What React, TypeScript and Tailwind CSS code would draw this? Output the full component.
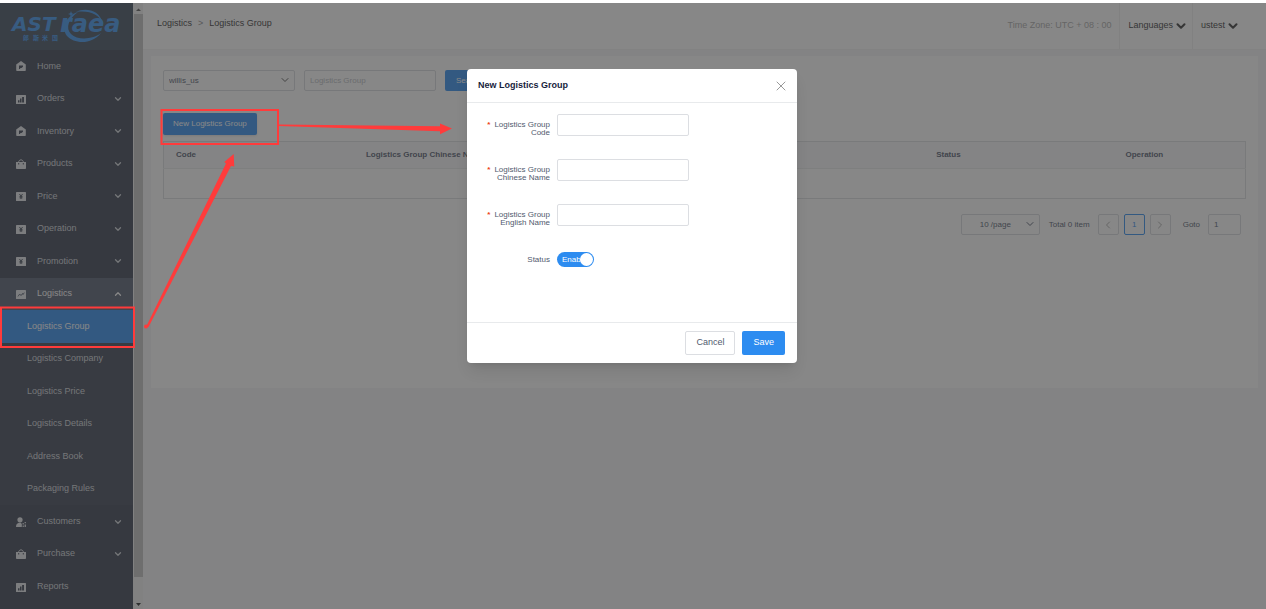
import { useState } from 'react';
import type { ReactNode } from 'react';
import { ChevronDown, ChevronLeft, ChevronRight, ChevronUp, X } from 'lucide-react';

type IconName = 'home' | 'bars' | 'bag' | 'yen' | 'trend' | 'user';

interface MenuItem {
  label: string;
  icon: IconName;
  expandable: boolean;
  children?: string[];
}

const MENU: MenuItem[] = [
  { label: 'Home', icon: 'home', expandable: false },
  { label: 'Orders', icon: 'bars', expandable: true },
  { label: 'Inventory', icon: 'home', expandable: true },
  { label: 'Products', icon: 'bag', expandable: true },
  { label: 'Price', icon: 'yen', expandable: true },
  { label: 'Operation', icon: 'yen', expandable: true },
  { label: 'Promotion', icon: 'yen', expandable: true },
  {
    label: 'Logistics',
    icon: 'trend',
    expandable: true,
    children: [
      'Logistics Group',
      'Logistics Company',
      'Logistics Price',
      'Logistics Details',
      'Address Book',
      'Packaging Rules',
    ],
  },
  { label: 'Customers', icon: 'user', expandable: true },
  { label: 'Purchase', icon: 'bag', expandable: true },
  { label: 'Reports', icon: 'bars', expandable: false },
];

const FIELDS = [
  { id: 'code', lines: ['Logistics Group', 'Code'] },
  { id: 'chinese-name', lines: ['Logistics Group', 'Chinese Name'] },
  { id: 'english-name', lines: ['Logistics Group', 'English Name'] },
];

const ICONS: Record<IconName, ReactNode> = {
  home: (
    <path
      fillRule="evenodd"
      d="M5 0 9.8 3.4V9.2a.8.8 0 0 1-.8.8H1a.8.8 0 0 1-.8-.8V3.4ZM3 4.4V8h1.2V7h1.3L7 5.8V4.4Z"
    />
  ),
  bars: (
    <path
      fillRule="evenodd"
      d="M.6 1h8.8a.6.6 0 0 1 .6.6v7.8a.6.6 0 0 1-.6.6H.6a.6.6 0 0 1-.6-.6V1.6A.6.6 0 0 1 .6 1ZM2 6.2v2.2h1.5V6.2Zm2-1.6v3.8h1.5V4.6Zm2.1-1.6v5.4h1.9V3Z"
    />
  ),
  bag: (
    <>
      <path
        fillRule="evenodd"
        d="M0 3h10v6.2a.8.8 0 0 1-.8.8H.8a.8.8 0 0 1-.8-.8ZM2.2 4v1.5h1V4Zm4.6 0v1.5h1V4Z"
      />
      <path d="M2.6 3.5C2.6 0 7.4 0 7.4 3.5" fill="none" stroke="currentColor" />
    </>
  ),
  yen: (
    <>
      <rect y="1" width="10" height="9" rx="0.6" />
      <path d="m3.4 3 1.6 2 1.6-2M5 5v3M3.5 5.4h3M3.5 6.8h3" fill="none" stroke="#363e4f" strokeWidth="0.9" />
    </>
  ),
  trend: (
    <>
      <rect y="1" width="10" height="9" rx="0.6" />
      <path d="M2 7.4 3.7 5 5 6.6 6.6 4.4 7 5.6 8.3 3.6" fill="none" stroke="#515a6e" strokeWidth="0.9" />
    </>
  ),
  user: (
    <>
      <circle cx="4" cy="2.8" r="2.6" />
      <path d="M0 10c0-3 1.3-3.6 3-4.2h1.8L5.8 7v3Z" />
      <path d="M6.6 6h1.2v1.4H6.6ZM8.6 5h1.3v1.3H8.6ZM6.6 8.5h1.2V10H6.6ZM8.6 7.5h1.3V10H8.6Z" />
    </>
  ),
};

function MenuIcon({ name }: { name: IconName }) {
  return (
    <svg viewBox="0 0 10 10" fill="currentColor" className="size-2.5 shrink-0 text-[#e4e6ea]" aria-hidden="true">
      {ICONS[name]}
    </svg>
  );
}

function Logo() {
  return (
    <svg viewBox="0 0 133 47" className="h-[47px] w-full" role="img" aria-label="Astraea" fill="#3a94f0">
      <g fontFamily="DejaVu Sans, sans-serif" fontWeight="bold" fontStyle="italic">
        <text x="12" y="28" fontSize="20">AST</text>
        <text x="60" y="29" fontSize="24">raea</text>
      </g>
      <g fontSize="6" fontWeight="bold" fontFamily="Noto Sans CJK SC, sans-serif">
        <text x="23" y="37">郎</text>
        <text x="33" y="37">斯</text>
        <text x="42" y="37">米</text>
        <text x="52" y="37">国</text>
      </g>
      <path d="M78 9C66 13 61 25 67 33 74 41 92 42 101 30 94 36 78 38 71 31 65 25 69 15 78 9Z" />
      <path d="M76 9C86 4 100 8 102 19 99 12 90 7 76 9Z" />
      <path d="m71 8 .8 2.200L74 11l-2.200.8L71 14l-.8-2.200L68 11l2.200-.8Z" />
    </svg>
  );
}

function Sidebar() {
  return (
    <aside className="flex w-[133px] shrink-0 flex-col bg-[#363e4f] text-[#d0d4da]">
      <div className="shrink-0 bg-[#3d4c5c]">
        <Logo />
      </div>
      <nav className="flex min-h-0 flex-1 flex-col pb-1.5 text-[9px]">
        {MENU.map((item) => (
          <div key={item.label} className="contents">
            <a
              href="#"
              className={`flex flex-1 items-center pr-2.5 pl-4 ${item.children ? 'bg-[#515a6e] text-white' : ''}`}
            >
              <MenuIcon name={item.icon} />
              <span className="ml-[11px] flex-1">{item.label}</span>
              {item.expandable &&
                (item.children ? (
                  <ChevronUp className="size-2.5" strokeWidth={3} />
                ) : (
                  <ChevronDown className="size-2.5" strokeWidth={3} />
                ))}
            </a>
            {item.children?.map((child, i) => (
              <a
                key={child}
                href="#"
                className={`flex flex-1 items-center pl-[27px] ${i === 0 ? 'bg-[#2d8cf0] text-white' : 'bg-[#3b4253]'}`}
              >
                {child}
              </a>
            ))}
          </div>
        ))}
      </nav>
    </aside>
  );
}

function ScrollRail() {
  return (
    <div className="flex w-2.5 shrink-0 flex-col items-end bg-[#f1f1f1]" aria-hidden="true">
      <svg viewBox="0 0 10 11" className="h-[11px] w-2.5">
        <path d="M3 8h5L5.500 5.500Z" fill="#555" />
      </svg>
      <div className="w-[9px] flex-1 bg-[#c1c1c1]" />
      <svg viewBox="0 0 10 32" className="h-8 w-2.5">
        <path d="M3 26h5L5.500 29Z" fill="#222" />
      </svg>
    </div>
  );
}

function Header() {
  return (
    <header className="flex h-[47px] shrink-0 items-stretch border-b border-[#f3f3f3] bg-white text-[9px] text-[#333]">
      <div className="flex flex-1 items-start gap-1.5 pt-3.5 pl-3.5">
        <a href="#">Logistics</a>
        <span className="text-[#888]">&gt;</span>
        <a href="#">Logistics Group</a>
      </div>
      <span className="flex items-center pr-2 text-[#aaa]">Time Zone: UTC + 08 : 00</span>
      <button className="flex items-center border-l border-[#f0f0f0] pr-1 pl-2">
        Languages <ChevronDown className="ml-px size-3.5" strokeWidth={3.5} />
      </button>
      <button className="mr-[26px] flex items-center border-l border-[#f0f0f0] pl-2">
        ustest <ChevronDown className="ml-px size-3.5" strokeWidth={3.5} />
      </button>
    </header>
  );
}

function Filters() {
  return (
    <div className="flex gap-[9px]">
      <div className="relative flex">
        <select
          aria-label="Account"
          className="h-[21px] w-[132px] appearance-none rounded-xs border border-[#d7d9de] bg-white pl-[5px] text-[8px] text-[#515a6e]"
        >
          <option>willis_us</option>
        </select>
        <ChevronDown className="pointer-events-none absolute top-1 right-1 size-3 text-[#555]" />
      </div>
      <input
        aria-label="Logistics Group"
        placeholder="Logistics Group"
        className="h-[21px] w-[132px] rounded-xs border border-[#d7d9de] pl-[5px] text-[8px] placeholder:text-[#b8bbc2]"
      />
      <button className="h-[21px] rounded-xs bg-[#2d8cf0] px-[11px] text-[8px] text-white">Search</button>
    </div>
  );
}

function Pagination() {
  return (
    <div className="mt-[15px] flex items-center justify-end pr-[5px] text-[8px] text-[#515a6e]">
      <div className="relative flex">
        <select
          aria-label="Page size"
          className="h-[21px] w-[79px] appearance-none rounded-xs border border-[#d7d9de] bg-white pl-[18px]"
        >
          <option>10 /page</option>
        </select>
        <ChevronDown className="pointer-events-none absolute top-1 right-1 size-3" />
      </div>
      <span className="mr-2 ml-[9px]">Total 0 item</span>
      <div className="flex gap-[5px]">
        <button aria-label="Previous page" className="grid size-[21px] place-items-center rounded-xs border border-[#d7d9de]">
          <ChevronLeft className="size-3 text-[#aaa]" />
        </button>
        <button className="grid size-[21px] place-items-center rounded-xs border border-[#2d8cf0] text-[#2d8cf0]">1</button>
        <button aria-label="Next page" className="grid size-[21px] place-items-center rounded-xs border border-[#d7d9de]">
          <ChevronRight className="size-3 text-[#aaa]" />
        </button>
      </div>
      <label htmlFor="goto" className="mr-2 ml-3">Goto</label>
      <input id="goto" defaultValue="1" className="h-[21px] w-[33px] rounded-xs border border-[#d7d9de] pl-[5px]" />
    </div>
  );
}

function GroupModal() {
  const [enabled, setEnabled] = useState(true);

  return (
    <form
      role="dialog"
      aria-labelledby="modal-title"
      className="mt-[66px] flex w-[330px] flex-col self-start rounded bg-white text-[#515a6e] shadow-lg"
    >
      <div className="flex h-[34px] items-center justify-between border-b border-[#e8eaec] pr-2 pl-[11px]">
        <h2 id="modal-title" className="text-[9px] font-bold text-[#17233d]">New Logistics Group</h2>
        <button type="button" aria-label="Close">
          <X className="size-4 text-[#999]" strokeWidth={1.5} />
        </button>
      </div>
      <div className="flex h-[219px] flex-col px-4 pt-[11px] text-[8px]">
        {FIELDS.map((field) => (
          <div key={field.id} className="mb-[23px] flex h-[22px] items-start">
            <label htmlFor={field.id} className="mr-[7px] w-[67px] pt-[7px] text-right leading-2">
              <span className="mr-1 font-bold text-[#ed4014]">*</span>
              {field.lines[0]}
              <br />
              {field.lines[1]}
            </label>
            <input id={field.id} className="h-[22px] w-[132px] rounded-xs border border-[#dcdee2] px-1.5" />
          </div>
        ))}
        <div className="mt-[3px] flex h-[15px] items-center">
          <label htmlFor="status" className="mr-[7px] w-[67px] text-right">Status</label>
          <span className="relative h-[15px] w-[37px] overflow-hidden rounded-full bg-[#2d8cf0]">
            <input
              id="status"
              type="checkbox"
              role="switch"
              checked={enabled}
              onChange={(e) => setEnabled(e.target.checked)}
              className="peer absolute inset-0 z-10 cursor-pointer opacity-0"
            />
            <span className="absolute inset-y-0 left-[5px] flex items-center text-[8px] text-white">Enable</span>
            <span className="absolute top-px left-px size-[13px] rounded-full bg-white peer-checked:right-px peer-checked:left-auto" />
          </span>
        </div>
      </div>
      <div className="flex justify-end gap-[7px] border-t border-[#e8eaec] px-3 py-2 text-[9px]">
        <button type="button" className="h-6 rounded-xs border border-[#dcdee2] px-2.5">Cancel</button>
        <button type="button" className="h-6 rounded-xs bg-[#2d8cf0] px-[11px] text-white">Save</button>
      </div>
    </form>
  );
}

// Red boxes and arrows that walk through the steps
function Annotations() {
  return (
    <svg
      viewBox="0 0 1266 609"
      className="pointer-events-none absolute top-0 left-0 z-20 h-[609px] w-[1266px]"
      fill="#ff3b3b"
      aria-hidden="true"
    >
      <g fill="none" stroke="#ff3b3b" strokeWidth="2">
        <rect x="1" y="307.500" width="133" height="39.500" />
        <rect x="161.500" y="110" width="116.500" height="34" />
      </g>
      <path d="M279 124.500v1.500l161 5.200v3L452 128.600 440 123.500v2.700Z" />
      <path d="M146.500 326 148.500 327 231 166 234.200 166.500 233.700 154 224.300 162 226 163.500Z" />
      <circle cx="146" cy="326.500" r="2" />
    </svg>
  );
}

export default function App() {
  return (
    <div className="relative flex h-screen flex-col overflow-hidden bg-white pt-[3px] font-['Liberation_Sans',Arial,sans-serif]">
      <div className="relative flex min-h-0 flex-1">
        <Sidebar />
        <ScrollRail />
        <div className="flex min-w-0 flex-1 flex-col bg-[#f6f6f7]">
          <Header />
          <main className="mx-2 mt-1.5 h-[332px] bg-white px-3 pt-3.5">
            <Filters />
            <button className="mt-[22px] h-[22px] rounded-xs bg-[#2d8cf0] px-2.5 text-[8px] text-white shadow">
              New Logistics Group
            </button>
            <table className="mt-1.5 w-full table-fixed border border-[#dcdee2] text-left text-[8px] text-[#515a6e]">
              <colgroup>
                <col className="w-[17.6%]" />
                <col className="w-[17.6%]" />
                <col className="w-[35.1%]" />
                <col className="w-[17.5%]" />
                <col />
              </colgroup>
              <thead>
                <tr className="h-[27px] bg-[#f8f8f9]">
                  <th className="pl-3">Code</th>
                  <th className="pl-3">Logistics Group Chinese Name</th>
                  <th className="pl-3">Logistics Group English Name</th>
                  <th className="pl-3">Status</th>
                  <th className="pl-3">Operation</th>
                </tr>
              </thead>
              <tbody>
                <tr className="h-[30px] border-t border-[#e8eaec]">
                  <td colSpan={5} />
                </tr>
              </tbody>
            </table>
            <Pagination />
          </main>
        </div>
        <div className="absolute inset-0 z-10 flex justify-center bg-[rgba(55,55,55,0.6)] pr-0.5">
          <GroupModal />
        </div>
      </div>
      <Annotations />
    </div>
  );
}
